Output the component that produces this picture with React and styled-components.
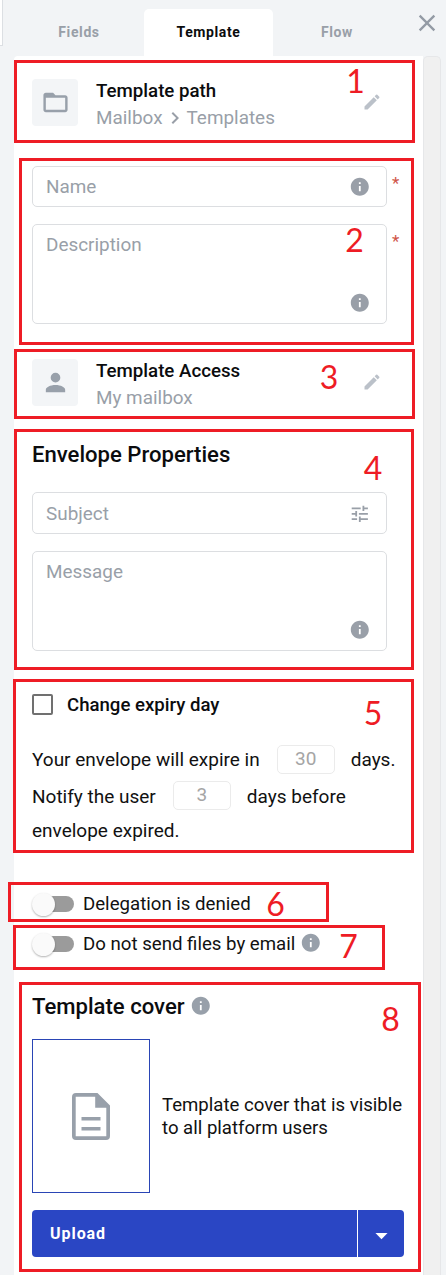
import React from "react";
import styled, { createGlobalStyle } from "styled-components";
import {
  MdEdit,
  MdInfo,
  MdTune,
  MdClose,
  MdArrowDropDown,
  MdChevronRight,
} from "react-icons/md";

const GlobalStyle = createGlobalStyle`
  *, *::before, *::after { box-sizing: border-box; }
  body { margin: 0; background: #f2f4f6; font-family: Roboto, sans-serif; color: #111; }
  button, input, textarea { font: inherit; }
`;

const Page = styled.div`
  position: relative;
  display: flex;
  width: 446px;
  height: 1275px;
  overflow: hidden;
  background: #f2f4f6;
`;

const Gutter = styled.div`
  flex: none;
  width: 14px;
`;

const GutterCard = styled.div`
  width: 3px;
  height: 46px;
  background: #fff;
  border-right: 1px solid #dcdfe3;
  border-bottom: 1px solid #dcdfe3;
`;

const Sidebar = styled.aside`
  flex: 1;
  display: flex;
  flex-direction: column;
`;

const Header = styled.header`
  display: flex;
  align-items: flex-end;
  height: 56px;
  flex: none;
`;

const Tab = styled.button`
  width: ${(p) => p.$width || 129}px;
  height: 47px;
  padding: 0 0 1px;
  border: 0;
  border-radius: 5px 5px 0 0;
  background: ${(p) => (p.$active ? "#fff" : "transparent")};
  color: ${(p) => (p.$active ? "#0b0c0e" : "#999fa8")};
  font-size: 14px;
  font-weight: 700;
  letter-spacing: 0.6px;
`;

const CloseButton = styled.button`
  display: flex;
  align-self: flex-start;
  margin: 9px 0 0 12px;
  padding: 0;
  border: 0;
  background: none;
  color: #949ba5;
`;

const Body = styled.div`
  flex: 1;
  display: flex;
`;

const Content = styled.main`
  width: 409px;
  padding: 23px 18px 0;
  background: #fff;
  border-radius: 4px 0 0 0;
`;

const Scrollbar = styled.div`
  width: 18px;
  background: #f0f0f0;
  border: 1px solid #e6e7e9;
  border-bottom: 0;
  border-radius: 5px 5px 0 0;
`;

const SummaryRow = styled.section`
  display: flex;
  align-items: center;
  height: 47px;
  margin-bottom: ${(p) => p.$gap}px;
`;

const IconTile = styled.div`
  display: flex;
  align-items: center;
  justify-content: center;
  width: 46px;
  height: 47px;
  margin-right: 18px;
  border-radius: 4px;
  background: #f3f5f7;
  color: #98a0aa;
`;

const SummaryText = styled.div`
  width: 265.5px;
  padding-top: 3px;
  font-size: 18.9px;
  line-height: 26px;
`;

const SummaryTitle = styled.div`
  font-size: 18.7px;
  line-height: 27px;
  font-weight: 500;
  color: #0b0c0e;
`;

const SummaryPath = styled.div`
  display: flex;
  align-items: center;
  color: #999fa8;
`;

const EditButton = styled.button`
  display: flex;
  padding: 0 0 2px;
  border: 0;
  background: none;
  color: #bbc1c9;
`;

const FieldRow = styled.div`
  display: flex;
  margin-bottom: ${(p) => p.$gap}px;
`;

const Field = styled.div`
  display: flex;
  align-items: ${(p) => (p.$multiline ? "flex-end" : "center")};
  width: 355px;
  height: ${(p) => p.$height}px;
  padding: ${(p) => (p.$multiline ? "0 15px 9px 13px" : "1px 15px 0 13px")};
  border: 1px solid #dcdee1;
  border-radius: 5px;
  color: #999fa8;
`;

const FieldLabel = styled.span`
  flex: 1;
  align-self: flex-start;
  padding-top: ${(p) => p.$top || 6}px;
  font-size: 18.9px;
  line-height: 27px;
`;

const Required = styled.span`
  margin: 7px 0 0 5px;
  font-size: 17px;
  line-height: 20px;
  color: #cf5448;
`;

const Heading = styled.h2`
  display: flex;
  align-items: center;
  gap: 5px;
  margin: 0 0 ${(p) => p.$gap}px;
  font-size: 22.1px;
  line-height: 28px;
  font-weight: 500;
  color: #0b0c0e;

  svg { color: #98a0aa; }
`;

const CheckRow = styled.label`
  display: flex;
  align-items: center;
  gap: 14px;
  height: 21px;
  font-size: 18.6px;
  font-weight: 500;
  color: #0b0c0e;
`;

const Checkbox = styled.span`
  width: 21px;
  height: 21px;
  border: 2px solid #707070;
  border-radius: 2px;
`;

const ExpiryText = styled.div`
  padding-top: 26px;
  margin-bottom: 47px;
`;

const Sentence = styled.div`
  display: flex;
  align-items: center;
  height: ${(p) => p.$height}px;
  font-size: 19px;
  white-space: nowrap;
`;

const DayInput = styled.span`
  width: 58px;
  height: 29px;
  margin: 0 16px ${(p) => p.$lift || 0}px 17px;
  border: 1px solid #ebebeb;
  border-radius: 5px;
  line-height: 25px;
  text-align: center;
  color: #a5a5a5;
`;

const ToggleRow = styled.label`
  display: flex;
  align-items: center;
  height: 24px;
  margin-bottom: ${(p) => p.$gap}px;
  font-size: 18.65px;
  white-space: nowrap;

  & > svg { margin: -3px 0 0 5px; color: #98a0aa; }
`;

const Track = styled.span`
  display: flex;
  align-items: center;
  width: 40px;
  height: 16px;
  margin: 0 9px 0 2px;
  border-radius: 8px;
  background: #9b9b9b;
`;

const Thumb = styled.span`
  width: 23px;
  height: 23px;
  flex: none;
  margin-left: -2px;
  border-radius: 50%;
  background: #fafafa;
  box-shadow: 0 1px 2px rgba(0, 0, 0, 0.3);
`;

const CoverRow = styled.div`
  display: flex;
  align-items: center;
  gap: 12px;
  margin-bottom: 17px;
`;

const CoverPreview = styled.div`
  display: flex;
  flex: none;
  align-items: center;
  justify-content: center;
  width: 118px;
  height: 154px;
  border: 1px solid #2a45b5;
  color: #98a0aa;
`;

const CoverText = styled.p`
  margin: 0;
  padding-top: 2px;
  font-size: 18.6px;
  line-height: 23px;
  white-space: nowrap;
`;

const SplitButton = styled.div`
  display: flex;
  width: 372px;
  height: 47px;
  overflow: hidden;
  border-radius: 4px;
  color: #fff;
`;

const UploadButton = styled.button`
  flex: 1;
  padding: 0 0 1px 18px;
  border: 0;
  border-right: 1px solid #fff;
  background: #2a46c4;
  color: inherit;
  font-size: 16px;
  font-weight: 700;
  letter-spacing: 0.95px;
  text-align: left;
`;

const MenuButton = styled.button`
  display: flex;
  align-items: center;
  justify-content: center;
  width: 46px;
  padding: 3px 0 0;
  border: 0;
  background: #2a46c4;
  color: inherit;
`;

const Frame = styled.div`
  position: absolute;
  left: ${(p) => p.$x}px;
  top: ${(p) => p.$y}px;
  width: ${(p) => p.$w}px;
  height: ${(p) => p.$h}px;
  border: 3px solid #ee1c25;
  pointer-events: none;
`;

const FrameNumber = styled.span`
  position: absolute;
  left: ${(p) => p.$x}px;
  top: ${(p) => p.$y}px;
  width: 20px;
  text-align: center;
  font-family: Lato, sans-serif;
  font-size: 32px;
  line-height: 32px;
  color: #ee1c25;
`;

/* Frame box plus the centre of its number, in page coordinates. */
const frames = [
  { x: 14, y: 60, w: 401, h: 83, nx: 355.5, ny: 80.5 },
  { x: 19, y: 158, w: 395, h: 187, nx: 354.5, ny: 239.5 },
  { x: 14, y: 349, w: 401, h: 70, nx: 329, ny: 376.5 },
  { x: 14, y: 429, w: 400, h: 241, nx: 373, ny: 467.5 },
  { x: 13, y: 679, w: 401, h: 174, nx: 373, ny: 712.5 },
  { x: 8, y: 882, w: 321, h: 40, nx: 275.5, ny: 903.5 },
  { x: 13, y: 925, w: 372, h: 45, nx: 348.5, ny: 945.5 },
  { x: 19, y: 982, w: 402, h: 290, nx: 390.5, ny: 1018.5 },
];

const FolderIcon = () => (
  <svg width="29" height="29" viewBox="0 0 24 24" fill="currentColor">
    <path d="M20 18H4V8h16v10zm0-12h-8l-2-2H4c-1.11 0-2 .89-2 2v12c0 1.1.9 2 2 2h16c1.1 0 2-.9 2-2V8c0-1.11-.9-2-2-2z" />
  </svg>
);

const PersonIcon = () => (
  <svg width="29" height="29" viewBox="0 0 24 24" fill="currentColor">
    <path d="M12 4a4 4 0 1 1 0 8 4 4 0 0 1 0-8zm0 10c4.42 0 8 1.79 8 4v2H4v-2c0-2.21 3.58-4 8-4z" />
  </svg>
);

const DocumentIcon = () => (
  <svg width="38" height="47" viewBox="0 0 38 47" fill="currentColor">
    <path
      fillRule="evenodd"
      d="M4 0h21.5L38 12.5V43a4 4 0 0 1-4 4H4a4 4 0 0 1-4-4V4a4 4 0 0 1 4-4zm-.3 3.7v39.6h30.6V14.7H23.2V3.7zM9.5 24h19v3.4h-19zM9.5 34h19v3.4h-19z"
    />
  </svg>
);

export default function App() {
  return (
    <Page>
      <GlobalStyle />
      <Gutter>
        <GutterCard />
      </Gutter>
      <Sidebar>
        <Header>
          <Tab $width={130}>Fields</Tab>
          <Tab $active>Template</Tab>
          <Tab $width={128}>Flow</Tab>
          <CloseButton aria-label="Close">
            <MdClose size={28} />
          </CloseButton>
        </Header>
        <Body>
          <Content>
            <SummaryRow $gap={40}>
              <IconTile>
                <FolderIcon />
              </IconTile>
              <SummaryText>
                <SummaryTitle>Template path</SummaryTitle>
                <SummaryPath>
                  Mailbox
                  <MdChevronRight size={24} />
                  Templates
                </SummaryPath>
              </SummaryText>
              <EditButton aria-label="Edit path">
                <MdEdit size={20} />
              </EditButton>
            </SummaryRow>

            <FieldRow $gap={17}>
              <Field $height={41}>
                <FieldLabel $top={5}>Name</FieldLabel>
                <MdInfo size={21.6} />
              </Field>
              <Required>*</Required>
            </FieldRow>
            <FieldRow $gap={35}>
              <Field $height={100} $multiline>
                <FieldLabel>Description</FieldLabel>
                <MdInfo size={21.6} />
              </Field>
              <Required>*</Required>
            </FieldRow>

            <SummaryRow $gap={34}>
              <IconTile>
                <PersonIcon />
              </IconTile>
              <SummaryText>
                <SummaryTitle>Template Access</SummaryTitle>
                <SummaryPath>My mailbox</SummaryPath>
              </SummaryText>
              <EditButton aria-label="Edit access">
                <MdEdit size={20} />
              </EditButton>
            </SummaryRow>

            <Heading $gap={24}>Envelope Properties</Heading>
            <FieldRow $gap={17}>
              <Field $height={42}>
                <FieldLabel>Subject</FieldLabel>
                <MdTune size={21.6} />
              </Field>
            </FieldRow>
            <FieldRow $gap={43}>
              <Field $height={100} $multiline>
                <FieldLabel>Message</FieldLabel>
                <MdInfo size={21.6} />
              </Field>
            </FieldRow>

            <CheckRow>
              <Checkbox />
              Change expiry day
            </CheckRow>
            <ExpiryText>
              <Sentence $height={36}>
                Your envelope will expire in <DayInput>30</DayInput> days.
              </Sentence>
              <Sentence $height={38}>
                Notify the user <DayInput $lift={2}>3</DayInput> days before
              </Sentence>
              <Sentence $height={30}>envelope expired.</Sentence>
            </ExpiryText>

            <ToggleRow $gap={16}>
              <Track>
                <Thumb />
              </Track>
              Delegation is denied
            </ToggleRow>
            <ToggleRow $gap={36}>
              <Track>
                <Thumb />
              </Track>
              Do not send files by email
              <MdInfo size={21.6} />
            </ToggleRow>

            <Heading $gap={19}>
              Template cover
              <MdInfo size={21.6} />
            </Heading>
            <CoverRow>
              <CoverPreview>
                <DocumentIcon />
              </CoverPreview>
              <CoverText>
                Template cover that is visible
                <br />
                to all platform users
              </CoverText>
            </CoverRow>
            <SplitButton>
              <UploadButton>Upload</UploadButton>
              <MenuButton aria-label="Upload options">
                <MdArrowDropDown size={29} />
              </MenuButton>
            </SplitButton>
          </Content>
          <Scrollbar />
        </Body>
      </Sidebar>

      {frames.map((f, i) => (
        <React.Fragment key={i}>
          <Frame $x={f.x} $y={f.y} $w={f.w} $h={f.h} />
          <FrameNumber $x={f.nx - 10} $y={f.ny - 16}>
            {i + 1}
          </FrameNumber>
        </React.Fragment>
      ))}
    </Page>
  );
}
